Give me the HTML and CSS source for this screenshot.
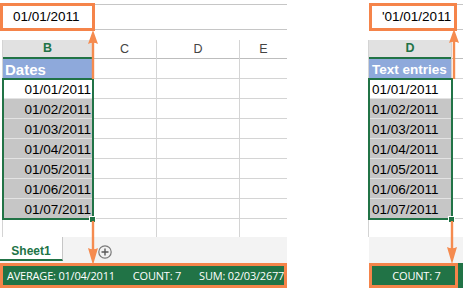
FILE: index.html
```html
<!DOCTYPE html>
<html lang="en">
<head>
    <meta charset="UTF-8">
    <meta name="viewport" content="width=device-width, initial-scale=1.0">
    <title>Dates vs text entries</title>
    <link rel="stylesheet" href="styles.css">
</head>
<body>
    <!-- real dates: status bar shows average, count and sum -->
    <div class="pane pane-dates">
        <div class="formula-bar">
            <div class="formula-box">01/01/2011</div>
        </div>
        <div class="grid">
            <div class="col col-b">
                <div class="head head-active">B</div>
                <div class="cell cell-title">Dates</div>
                <div class="selection">
                    <div class="cell cell-current">01/01/2011</div>
                    <div class="cell">01/02/2011</div>
                    <div class="cell">01/03/2011</div>
                    <div class="cell">01/04/2011</div>
                    <div class="cell">01/05/2011</div>
                    <div class="cell">01/06/2011</div>
                    <div class="cell">01/07/2011</div>
                    <span class="fill-handle"></span>
                </div>
                <div class="cell-end"></div>
            </div>
            <div class="col col-c">
                <div class="head">C</div>
                <div class="cell"></div><div class="cell"></div><div class="cell"></div><div class="cell"></div>
                <div class="cell"></div><div class="cell"></div><div class="cell"></div><div class="cell"></div>
                <div class="cell-end"></div>
            </div>
            <div class="col col-d">
                <div class="head">D</div>
                <div class="cell"></div><div class="cell"></div><div class="cell"></div><div class="cell"></div>
                <div class="cell"></div><div class="cell"></div><div class="cell"></div><div class="cell"></div>
                <div class="cell-end"></div>
            </div>
            <div class="col col-e">
                <div class="head">E</div>
                <div class="cell"></div><div class="cell"></div><div class="cell"></div><div class="cell"></div>
                <div class="cell"></div><div class="cell"></div><div class="cell"></div><div class="cell"></div>
                <div class="cell-end"></div>
            </div>
        </div>
        <div class="tabs">
            <div class="tab">Sheet1</div>
            <span class="add-sheet">
                <svg width="14" height="14" viewBox="0 0 14 14">
                    <circle cx="7" cy="7" r="6.2" fill="none" stroke="#7a7a7a" stroke-width="1.2"/>
                    <path d="M7 3.5v7M3.5 7h7" stroke="#5a5a5a" stroke-width="1.4"/>
                </svg>
            </span>
        </div>
        <div class="status">
            <span>AVERAGE: 01/04/2011</span>
            <span>COUNT: 7</span>
            <span>SUM: 02/03/2677</span>
        </div>
        <svg class="arrow arrow-up" width="12" height="49" viewBox="0 0 12 49">
            <path d="M6 0 L11 14 Q6 11.5 1 14 Z"/>
            <rect x="4.8" y="11" width="2.4" height="38"/>
        </svg>
        <svg class="arrow arrow-down" width="12" height="44" viewBox="0 0 12 44">
            <rect x="4.8" y="0" width="2.4" height="30"/>
            <path d="M1 27 Q6 29.5 11 27 L6 44 Z"/>
        </svg>
    </div>

    <!-- text entries: only count is shown -->
    <div class="pane pane-text">
        <div class="formula-bar">
            <div class="formula-box">'01/01/2011</div>
        </div>
        <div class="grid">
            <div class="col col-d2">
                <div class="head head-active">D</div>
                <div class="cell cell-title">Text entries</div>
                <div class="selection">
                    <div class="cell cell-current">01/01/2011</div>
                    <div class="cell">01/02/2011</div>
                    <div class="cell">01/03/2011</div>
                    <div class="cell">01/04/2011</div>
                    <div class="cell">01/05/2011</div>
                    <div class="cell">01/06/2011</div>
                    <div class="cell">01/07/2011</div>
                    <span class="fill-handle"></span>
                </div>
                <div class="cell-end"></div>
            </div>
            <div class="col col-f">
                <div class="head"></div>
                <div class="cell"></div><div class="cell"></div><div class="cell"></div><div class="cell"></div>
                <div class="cell"></div><div class="cell"></div><div class="cell"></div><div class="cell"></div>
                <div class="cell-end"></div>
            </div>
        </div>
        <div class="tabs"></div>
        <div class="status">
            <div class="status-box">COUNT: 7</div>
        </div>
        <svg class="arrow arrow-up" width="12" height="50" viewBox="0 0 12 50">
            <path d="M6 0 L11 14 Q6 11.5 1 14 Z"/>
            <rect x="4.8" y="11" width="2.4" height="39"/>
        </svg>
        <svg class="arrow arrow-down" width="12" height="43" viewBox="0 0 12 43">
            <rect x="4.8" y="0" width="2.4" height="29"/>
            <path d="M1 26 Q6 28.5 11 26 L6 43 Z"/>
        </svg>
    </div>
</body>
</html>
```

FILE: styles.css
```css
* {
    margin: 0;
    padding: 0;
    box-sizing: border-box;
}

body {
    display: flex;
    gap: 82px;
    width: 463px;
    height: 288px;
    overflow: hidden;
    background: #fff;
    font-family: "Liberation Sans", Arial, sans-serif;
    color: #000;
}

.pane {
    position: relative;
    display: flex;
    flex-direction: column;
}

.pane-dates {
    width: 287px;
}

.pane-text {
    width: 94px;
}

/* formula bar */
.formula-bar {
    margin-top: 4px;
    margin-bottom: 10px;
    height: 26px;
    border-top: 1px solid #c6c6c6;
    border-bottom: 1px solid #c6c6c6;
}

.formula-box {
    height: 28px;
    margin-top: -2px;
    border: 3px solid #f5844a;
    background: #fff;
    font-size: 13.5px;
    line-height: 20px;
    padding: 1px 0 0 10px;
}

.pane-dates .formula-box {
    width: 95px;
}

.pane-text .formula-box {
    width: 88px;
}

/* grid */
.grid {
    display: flex;
    height: 197px;
}

.pane-dates .grid {
    margin-left: 2px;
    border-left: 1px solid #d4d4d4;
}

.pane-text .grid {
    margin-left: -1px;
    border-left: 1px solid #d4d4d4;
}

.col {
    display: flex;
    flex-direction: column;
    border-right: 1px solid #d4d4d4;
}

.col-b { width: 90px; }
.col-c { width: 64px; }
.col-d { width: 83px; }
.col-e { width: 47px; border-right: none; }
.col-d2 { width: 83px; }
.col-f { width: 11px; border-right: none; }

.head {
    height: 19px;
    border-bottom: 1px solid #bdbdbd;
    font-size: 12.5px;
    line-height: 18px;
    text-align: center;
    color: #444;
}

.head-active {
    background: #e1e1e1;
    color: #217346;
    font-weight: bold;
    line-height: 17px;
    border-bottom: 2px solid #217346;
}

.cell {
    height: 20px;
    border-bottom: 1px solid #d4d4d4;
    font-size: 13.5px;
    line-height: 17px;
    padding-top: 2px;
    white-space: nowrap;
}

.cell-end {
    height: 18px;
}

.cell-title {
    background: #8ea9db;
    color: #fff;
    font-weight: bold;
    padding-left: 2px;
}

.pane-dates .cell-title {
    font-size: 15px;
}

.pane-text .cell-title {
    padding-left: 3px;
}

/* selected range */
.selection {
    position: relative;
}

.selection .cell {
    background: #c6c6c6;
    border-bottom-color: #e3e3e3;
}

.selection .cell-current {
    background: #fff;
}

.pane-dates .selection .cell {
    text-align: right;
    padding-right: 1px;
}

.pane-text .selection .cell {
    padding-left: 3px;
}

.selection::after {
    content: "";
    position: absolute;
    top: -1px;
    left: -1px;
    right: -2px;
    bottom: -1px;
    border: 2px solid #217346;
    pointer-events: none;
}

.fill-handle {
    position: absolute;
    right: -4px;
    bottom: -4px;
    width: 7px;
    height: 7px;
    background: #217346;
    border: 1px solid #fff;
    z-index: 1;
}

/* sheet tabs */
.tabs {
    display: flex;
    height: 26px;
    background: #f3f3f3;
}

.tab {
    width: 63px;
    height: 24px;
    background: #fff;
    border-right: 1px solid #c6c6c6;
    border-bottom: 2px solid #217346;
    color: #217346;
    font-weight: bold;
    font-size: 12px;
    line-height: 15px;
    padding-top: 7px;
    text-align: center;
}

.add-sheet {
    display: block;
    width: 14px;
    height: 14px;
    margin: 8px 0 0 35px;
}

.add-sheet svg {
    display: block;
}

/* status bar */
.status {
    display: flex;
    align-items: center;
    gap: 18px;
    height: 25px;
    background: #217346;
    color: #fff;
    font-family: "Open Sans", sans-serif;
    font-size: 11px;
    letter-spacing: -0.2px;
    white-space: nowrap;
}

.pane-dates .status {
    border: 3px solid #f5844a;
    padding-left: 4px;
}

.status-box {
    width: 89px;
    height: 25px;
    border: 3px solid #f5844a;
    text-align: center;
    line-height: 19px;
    padding-left: 6px;
}

/* callout arrows */
.arrow {
    position: absolute;
    fill: #f58b4f;
    pointer-events: none;
    z-index: 2;
}

.pane-dates .arrow-up { left: 87px; top: 30px; }
.pane-dates .arrow-down { left: 87px; top: 221px; }
.pane-text .arrow-up { left: 79px; top: 29px; }
.pane-text .arrow-down { left: 77px; top: 221px; }
```
